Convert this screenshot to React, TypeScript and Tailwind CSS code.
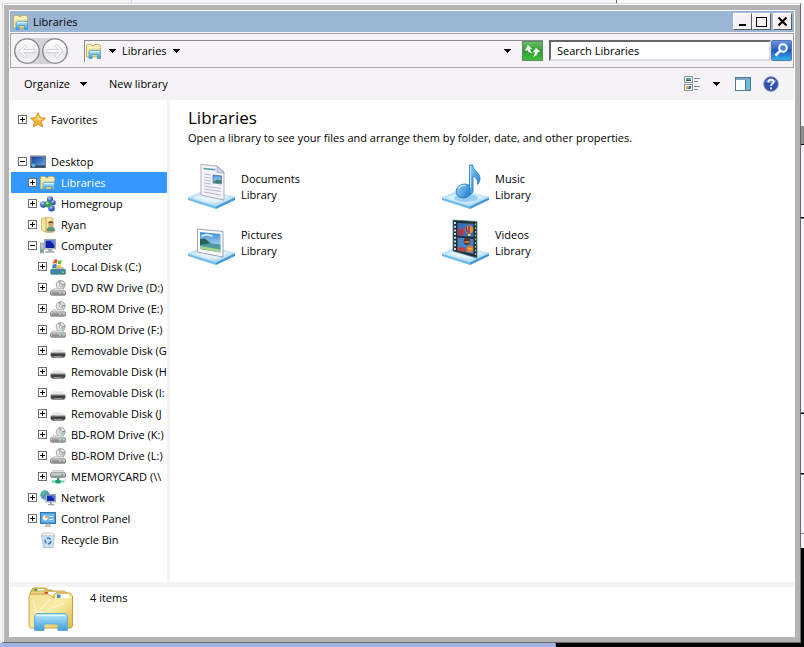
import { ReactNode, useState } from 'react';

type IconName =
  | 'star' | 'desktop' | 'library' | 'homegroup' | 'user' | 'computer' | 'localDisk'
  | 'optical' | 'removable' | 'netDrive' | 'network' | 'controlPanel' | 'recycle';

type TreeItem = { label: string; icon: IconName; level: 0 | 1 | 2; box?: '+' | '-' };

const TREE: TreeItem[] = [
  { label: 'Desktop', icon: 'desktop', level: 0, box: '-' },
  { label: 'Libraries', icon: 'library', level: 1, box: '+' },
  { label: 'Homegroup', icon: 'homegroup', level: 1, box: '+' },
  { label: 'Ryan', icon: 'user', level: 1, box: '+' },
  { label: 'Computer', icon: 'computer', level: 1, box: '-' },
  { label: 'Local Disk (C:)', icon: 'localDisk', level: 2, box: '+' },
  { label: 'DVD RW Drive (D:)', icon: 'optical', level: 2, box: '+' },
  { label: 'BD-ROM Drive (E:)', icon: 'optical', level: 2, box: '+' },
  { label: 'BD-ROM Drive (F:)', icon: 'optical', level: 2, box: '+' },
  { label: 'Removable Disk (G', icon: 'removable', level: 2, box: '+' },
  { label: 'Removable Disk (H', icon: 'removable', level: 2, box: '+' },
  { label: 'Removable Disk (I:', icon: 'removable', level: 2, box: '+' },
  { label: 'Removable Disk (J', icon: 'removable', level: 2, box: '+' },
  { label: 'BD-ROM Drive (K:)', icon: 'optical', level: 2, box: '+' },
  { label: 'BD-ROM Drive (L:)', icon: 'optical', level: 2, box: '+' },
  { label: 'MEMORYCARD (\\\\', icon: 'netDrive', level: 2, box: '+' },
  { label: 'Network', icon: 'network', level: 1, box: '+' },
  { label: 'Control Panel', icon: 'controlPanel', level: 1, box: '+' },
  { label: 'Recycle Bin', icon: 'recycle', level: 1 },
];

const INDENT = ['pl-[7px]', 'pl-[17px]', 'pl-[27px]'];

// shared gradients, referenced by id from every icon below
const Gradients = () => (
  <svg width="0" height="0" className="absolute" aria-hidden="true">
    <defs>
      <linearGradient id="gFolder" x1="0" y1="0" x2="1" y2="1">
        <stop offset="0" stopColor="#f3e092" /><stop offset=".5" stopColor="#f8eba6" /><stop offset="1" stopColor="#e3bb4c" />
      </linearGradient>
      <linearGradient id="gBlue" x1="0" y1="0" x2="0" y2="1">
        <stop offset="0" stopColor="#b6e6f8" /><stop offset="1" stopColor="#3f9fdc" />
      </linearGradient>
      <linearGradient id="gScreen" x1="0" y1="0" x2="1" y2="1">
        <stop offset="0" stopColor="#1a3f92" /><stop offset="1" stopColor="#5da2ee" />
      </linearGradient>
      <linearGradient id="gTray" x1="0" y1="0" x2="1" y2="1">
        <stop offset="0" stopColor="#a9daf3" /><stop offset=".5" stopColor="#dcf0fa" /><stop offset="1" stopColor="#97cdee" />
      </linearGradient>
      <linearGradient id="gNote" x1="0" y1="0" x2="1" y2="1">
        <stop offset="0" stopColor="#8fd2fb" /><stop offset="1" stopColor="#1672c8" />
      </linearGradient>
      <linearGradient id="gSky" x1="0" y1="0" x2="0" y2="1">
        <stop offset="0" stopColor="#3f8fd6" /><stop offset="1" stopColor="#d9f1f8" />
      </linearGradient>
      <linearGradient id="gDrive" x1="0" y1="0" x2="0" y2="1">
        <stop offset="0" stopColor="#f2f2f2" /><stop offset="1" stopColor="#8c8c8c" />
      </linearGradient>
      <linearGradient id="gDark" x1="0" y1="0" x2="0" y2="1">
        <stop offset="0" stopColor="#8a8a8a" /><stop offset=".4" stopColor="#3a3a3a" /><stop offset="1" stopColor="#5c5c5c" />
      </linearGradient>
      <radialGradient id="gBall" cx=".4" cy=".3" r=".8">
        <stop offset="0" stopColor="#b9cdfa" /><stop offset=".5" stopColor="#4468cc" /><stop offset="1" stopColor="#1e3390" />
      </radialGradient>
      <linearGradient id="gGreen" x1="0" y1="0" x2="0" y2="1">
        <stop offset="0" stopColor="#6cc069" /><stop offset=".5" stopColor="#2f9c33" /><stop offset="1" stopColor="#3dc23c" />
      </linearGradient>
      <linearGradient id="gSearch" x1="0" y1="0" x2="0" y2="1">
        <stop offset="0" stopColor="#6f9ae6" /><stop offset=".5" stopColor="#1f56c4" /><stop offset="1" stopColor="#2fb9ee" />
      </linearGradient>
      <linearGradient id="gRound" x1="0" y1="0" x2="0" y2="1">
        <stop offset="0" stopColor="#ffffff" /><stop offset=".5" stopColor="#f1f0f3" /><stop offset=".55" stopColor="#e4e3e8" /><stop offset="1" stopColor="#f8f8fa" />
      </linearGradient>
    </defs>
  </svg>
);

const LibraryGlyph = () => (
  <>
    <path d="M.5 2.500 1 1.500h4l1 1h2l.5-1h5l1 1.500v11H.5z" fill="url(#gFolder)" stroke="#c9a548" strokeWidth=".8" />
    <path d="M2 2.600h2.500M9.500 2.600h3" stroke="#fff" />
    <path d="M1 4.500h13.500" stroke="#fbf3c4" />
    <path d="M3 15.500V8.300l1-1h9.500l1 1v7.200h-3v-4H6v4z" fill="url(#gBlue)" stroke="#3d9bd0" strokeWidth=".8" />
    <path d="M4 8.600h9.500" stroke="#e3f7fd" />
  </>
);

const glyphs: Record<IconName, ReactNode> = {
  star: (
    <>
      <path d="M8 .8 10.200 5.600l5.200.6-3.900 3.500 1.100 5.200L8 12.300l-4.600 2.600 1.100-5.200L.6 6.200l5.200-.6z" fill="#f9b233" stroke="#d98322" strokeWidth=".9" />
      <path d="M8 2.500 9.500 6.300l3.500.5-3 2.300L8 8z" fill="#fee48c" />
      <path d="M8 2.500V8L3 6.900l3.500-.6z" fill="#fdd160" />
    </>
  ),
  desktop: (
    <>
      <rect x=".5" y="2" width="15" height="11.500" fill="#8496ac" stroke="#6b7b8e" />
      <rect x="1.500" y="3" width="13" height="8.500" fill="url(#gScreen)" />
      <path d="M1 11.500h14v2H1z" fill="#2b3f5c" />
      <circle cx="3.500" cy="11.500" r="1.800" fill="#58b8d8" />
    </>
  ),
  library: <LibraryGlyph />,
  homegroup: (
    <>
      <path d="M4 9 8 5l5-2M8 5l4 8" stroke="#8aa0cf" strokeWidth="1.500" fill="none" />
      <circle cx="3.300" cy="8.500" r="3.200" fill="url(#gBall)" />
      <circle cx="10" cy="3.400" r="3.100" fill="url(#gBall)" />
      <circle cx="13.200" cy="6.500" r="2.600" fill="url(#gBall)" />
      <circle cx="11.500" cy="12.300" r="3.300" fill="url(#gBall)" />
      <circle cx="8" cy="8.200" r="3.300" fill="#2f9f4a" />
      <circle cx="7.300" cy="7" r="1.400" fill="#9be09d" />
    </>
  ),
  user: (
    <>
      <path d="M1.500 1.500 6 .8h7v14.500H6L1.500 13z" fill="url(#gFolder)" stroke="#c9ac55" strokeWidth=".8" />
      <path d="M6 1v14" stroke="#b99741" strokeWidth=".8" />
      <path d="M7 14c0-3 1.500-4 3.800-4s4 1 4 4z" fill="#5c9b86" stroke="#467a68" strokeWidth=".6" />
      <circle cx="10.800" cy="7" r="2.600" fill="#d9a673" />
      <path d="M8.200 6.500c0-3.500 5.200-3.500 5.200 0-1.500-1-3.500-1-5.200 0z" fill="#6b4526" />
    </>
  ),
  computer: (
    <>
      <rect x=".3" y="5" width="3" height="10" fill="#b7bfc4" stroke="#7d868c" strokeWidth=".6" />
      <path d="M1 11h1.500v3H1z" fill="#3cb44b" />
      <rect x="4.500" y="1.500" width="11" height="9.500" fill="#d3d7dc" stroke="#8f979e" strokeWidth=".8" />
      <rect x="5.500" y="2.500" width="9" height="7.500" fill="#1020a8" />
      <path d="M10 2.500h4.500v5z" fill="#5f80f2" />
      <path d="M8 11h4v2h2.500v1.800H5.500V13H8z" fill="#aab0b6" />
    </>
  ),
  localDisk: (
    <>
      <path d="M.7 11 3 8h10l2.500 3z" fill="#a9c5d0" />
      <rect x=".7" y="10.500" width="14.800" height="4.800" rx="1" fill="#3c87a8" stroke="#5a6e78" strokeWidth=".7" />
      <path d="M12 12.500h2v1.500h-2z" fill="#5fe06a" />
      <path d="M3.500 1.500Q6-.5 7.500 1L7 4.500Q5 3.500 3 5z" fill="#e4572b" />
      <path d="M8.300 1.200Q10 2.500 12 .8L11.300 4.500Q9.500 6 7.700 4.800z" fill="#6fb83b" />
      <path d="M2.800 5.700Q5 4.300 6.800 5.500L6.200 9.200Q4.500 8 2.200 9.200z" fill="#3a7bd0" />
      <path d="M7.500 5.700Q9 6.900 11.200 5.500L10.500 9.300Q8.700 10.500 7 9.300z" fill="#f6c22c" />
    </>
  ),
  optical: (
    <>
      <circle cx="10.700" cy="5" r="4.500" fill="#e2e2e8" stroke="#9a9aa0" strokeWidth=".8" />
      <path d="M10.700 5 8 1.200a4.500 4.500 0 0 1 3-.6z" fill="#a6abb4" />
      <path d="M10.700 5 14.700 6.500a4.500 4.500 0 0 1-1.800 2.300z" fill="#9ccca5" />
      <path d="M10.700 5 15 3.500v2z" fill="#8f8f96" />
      <circle cx="10.700" cy="5" r="1.300" fill="#fff" stroke="#888" strokeWidth=".6" />
      <path d="M.8 11.500 3 8.800h9.500l2.700 2.700z" fill="#ececec" stroke="#a3a3a3" strokeWidth=".6" />
      <rect x=".6" y="11" width="14.800" height="4.200" rx="1" fill="url(#gDrive)" stroke="#757575" strokeWidth=".8" />
      <path d="M2 13h7" stroke="#555" strokeWidth=".8" />
      <path d="M11 12.300h1.500v1.500H11z" fill="#37b24a" />
    </>
  ),
  removable: (
    <>
      <path d="M.8 9.500 3.500 6.500h9l2.700 3z" fill="#e6e6e6" />
      <path d="M.6 9.500h14.800v3.200l-1 1.500-1.500.6H3.100l-1.500-.6-1-1.500z" fill="url(#gDark)" />
      <path d="M1 9.600h14" stroke="#b3b3b3" />
      <path d="M4 13h8l.6 2H3.400z" fill="#8e8e8e" />
    </>
  ),
  netDrive: (
    <>
      <path d="M1 4 3 1.500h10L15 4z" fill="#e4e4e4" stroke="#aaa" strokeWidth=".5" />
      <rect x=".6" y="3.800" width="14.800" height="4.500" rx="1" fill="url(#gDrive)" stroke="#757575" strokeWidth=".8" />
      <path d="M11.500 5.300H13v1.500h-1.500z" fill="#37b24a" />
      <path d="M7 8.600h2.500v3.200H7z" fill="#2fa57f" />
      <path d="M1.500 11.500h13v2h-13z" fill="#62cda9" />
      <path d="M5.500 11h5v3.500h-5z" fill="#1f9a72" />
    </>
  ),
  network: (
    <>
      <circle cx="5" cy="5" r="4.700" fill="#4a9ad8" />
      <path d="M2 2Q5 0 6.500 1.500L5 4 2.500 5.500.6 4.500zM5 6l2.500-.5V9L5 9.500z" fill="#57b869" />
      <rect x="6" y="4.500" width="9.500" height="7.500" fill="#c9d2dc" stroke="#77848f" strokeWidth=".7" />
      <rect x="7" y="5.500" width="7.500" height="5.500" fill="#1226b0" />
      <path d="M10.500 5.500h4v4z" fill="#4a73ee" />
      <path d="M10 12h1.800v2H14v1.300H8V14h2z" fill="#9aa6b1" />
    </>
  ),
  controlPanel: (
    <>
      <rect x=".5" y="1.500" width="15" height="11" fill="#4d9fdb" stroke="#3579ae" />
      <rect x="2" y="3" width="12" height="8" fill="#6fb5e6" />
      <circle cx="5.200" cy="7" r="2.500" fill="#e9f5fc" />
      <path d="M5.200 7V4.500A2.500 2.500 0 0 1 7.700 7z" fill="#f0a23a" />
      <path d="M9.500 5.500h3.500M9.500 8.500h3.500" stroke="#fff" strokeWidth="1.200" />
      <path d="M5 15.500Q6 12.500 8 12.500t3 3z" fill="#c2c7cc" stroke="#9aa0a5" strokeWidth=".5" />
    </>
  ),
  recycle: (
    <>
      <path d="M1.500 2.500h13L13 15.500H3.500z" fill="#cfe2f1" stroke="#9db9d0" strokeWidth=".8" />
      <path d="M1.500 2 4 .6l2 1 2.500-1 2 1L13 .8l2 1.500-1 1.500H2z" fill="#eef4f8" stroke="#a3b4c2" strokeWidth=".6" />
      <circle cx="8" cy="9" r="2.800" fill="none" stroke="#3e85d2" strokeWidth="1.700" strokeDasharray="4.200 1.600" />
    </>
  ),
};

const SmallIcon = ({ name }: { name: IconName }) => (
  <svg width="16" height="16" viewBox="0 0 16 16" className="shrink-0" aria-hidden="true">{glyphs[name]}</svg>
);

const Caret = () => (
  <svg width="8" height="4" viewBox="0 0 8 4" className="shrink-0" shapeRendering="crispEdges" aria-hidden="true">
    <path d="M0 0h8L4 4z" />
  </svg>
);

const ExpandBox = ({ sign, label }: { sign: '+' | '-'; label: string }) => (
  <button aria-label={`Toggle ${label}`} className="shrink-0">
    <svg width="9" height="9" viewBox="0 0 9 9" className="block" shapeRendering="crispEdges">
      <rect x=".5" y=".5" width="8" height="8" fill="#fff" stroke="#6e6e6e" />
      <path d="M2 4h5v1H2z" />
      {sign === '+' && <path d="M4 2h1v5H4z" />}
    </svg>
  </button>
);

function TreeRow({ item, selected, onSelect }: { item: TreeItem; selected: boolean; onSelect: () => void }) {
  return (
    <li className={`flex h-[21px] items-center gap-[3px] ml-px ${INDENT[item.level]} ${selected ? 'bg-[#3399ff] text-white' : ''}`}>
      {item.box ? <ExpandBox sign={item.box} label={item.label} /> : <span className="w-[9px] shrink-0" />}
      <button onClick={onSelect} className="flex items-center gap-[5px] whitespace-nowrap">
        <SmallIcon name={item.icon} />
        {item.label}
      </button>
    </li>
  );
}

const Tray = () => (
  <>
    <path d="M0 35.500 28 44v3L0 38z" fill="#6fbbe8" />
    <path d="M28 44 47 35v3L28 47z" fill="#4299d3" />
    <path d="M0 35.500 18 28.500 47 35 28 44z" fill="url(#gTray)" stroke="#a9d8f2" strokeWidth=".6" />
    <path d="M6 35.500 19 31l21 4.300L28 41z" fill="#eaf6fc" opacity=".8" />
  </>
);

const LIBRARIES: { name: string; art: ReactNode }[] = [
  {
    name: 'Documents',
    art: (
      <>
        <path d="M13 2.500 29 4l7 6v28L13 33z" fill="#f4f4fa" stroke="#9a9cab" strokeWidth=".8" />
        <path d="M29 4v6.500l7 .5z" fill="#d3d6e2" stroke="#8d90a3" strokeWidth=".6" />
        <path d="m15.500 6.500 12 1.300" stroke="#4c9cad" strokeWidth="1.600" />
        <path d="m16 12 7 1m-7 2 7 1m-7 2 7 1m-7 2 7 1m-7 2 17 2.500M16 27l17 2.500M16 30l17 3" stroke="#b9b4d6" />
        <path d="m25 13 8.500 1v8L25 21z" fill="url(#gSky)" stroke="#3e6a9c" strokeWidth=".7" />
        <path d="m25.300 19.500 4-2 4 1v3l-8-1z" fill="#3e7867" />
      </>
    ),
  },
  {
    name: 'Music',
    art: (
      <>
        <ellipse cx="24" cy="36" rx="12" ry="4" fill="#64b5ea" opacity=".6" />
        <ellipse cx="22" cy="29" rx="8" ry="6.800" fill="url(#gNote)" stroke="#2275bd" strokeWidth=".8" transform="rotate(-20 22 29)" />
        <path d="M27.500 3h3.200c.5 6 7.300 7.500 7.300 13.500 0 3-1.500 5-2.500 6 .5-5-1.500-7-4.500-8.500V29c0 2-1 3-3.500 3z" fill="url(#gNote)" stroke="#2275bd" strokeWidth=".8" />
        <path d="M28.500 4v22" stroke="#b9e5fd" />
        <path d="M16.500 27c1-2.500 4-4 7-3.500" stroke="#c5ebff" strokeWidth="1.300" fill="none" />
      </>
    ),
  },
  {
    name: 'Pictures',
    art: (
      <>
        <path d="m9.500 11 25.500 2.500V39L9.500 34z" fill="#fbfcfd" stroke="#8f9aa6" strokeWidth=".9" />
        <path d="m12 14 20.500 2v18.500L12 31z" fill="url(#gSky)" />
        <path d="m12 23 5-1.500 7 4 8.500 1v8L12 31z" fill="#4f9aa0" />
        <path d="m12 21 5-.5 5 4.500-10 2z" fill="#2b6054" />
        <path d="m12 28 20.500 3.500v3L12 31z" fill="#a9d08c" />
        <path d="m13.500 18 5-1.500 6 1.500" stroke="#e9f5fc" strokeWidth="1.500" fill="none" />
      </>
    ),
  },
  {
    name: 'Videos',
    art: (
      <>
        <path d="m11 2 24 1.500V40L11 33z" fill="#262b2e" stroke="#3d7f86" strokeWidth=".8" />
        <path d="M13 4v29" stroke="#d5eef0" strokeWidth="1.800" strokeDasharray="2 1.700" />
        <path d="M33.500 5.500V39" stroke="#9db7ba" strokeWidth="1.300" strokeDasharray="2 1.700" />
        <path d="m15.500 5 16 .8V19l-16-1.500z" fill="#3472bd" />
        <path d="m15.500 19.500 16 1.500v15l-16-3.500z" fill="#3c86cf" />
        <path d="m15.500 11 6-.5 1 6-7 1z" fill="#c93a3a" />
        <path d="M17 12v5m2.500-5v5" stroke="#5b3f8e" />
        <circle cx="27" cy="11.500" r="4.200" fill="#ec8c2c" />
        <path d="M27 7.500v8M24.500 8.500q-1 3 1 6" stroke="#5b2c7e" strokeWidth="1.300" fill="none" />
        <path d="M26 16h2.500v2H26z" fill="#f5d34d" />
        <circle cx="25" cy="23.500" r="3.400" fill="#6b2c2c" />
        <circle cx="28" cy="31" r="3.300" fill="#eb7d27" />
        <path d="m15.500 29 7 .5 2 4.500-9-1.500z" fill="#c0413a" />
        <path d="M22.500 24h5M26 30l4 1" stroke="#f3d04b" />
      </>
    ),
  },
];

const StatusFolder = () => (
  <svg width="48" height="48" viewBox="0 0 48 48" className="shrink-0" aria-hidden="true">
    <path d="M3 4 5 1h13l2 2h4l1 2H3z" fill="#e9c863" stroke="#b98f33" strokeWidth=".8" />
    <path d="M6 2h10v3.500H6z" fill="#fff" /><path d="M6 2h3.500v3.500H6z" fill="#41a447" />
    <path d="M2 8V6l2-2h32l5 3v5z" fill="#efd67c" stroke="#c09a3f" strokeWidth=".8" />
    <path d="M16.500 5H28v3.500H16.500z" fill="#fff" /><path d="M16.500 5H20v3.500h-3.500z" fill="#dc4a27" />
    <path d="M1 9l1.500-2H20l6 4V8l2-2h14l2.500 3v30L43 41H2.500L1 39z" fill="url(#gFolder)" stroke="#c39a3c" strokeWidth=".9" />
    <path d="M29 7.500h12V11H29z" fill="#fff" /><path d="M29 7.500h3.500V11H29z" fill="#3e8fbb" />
    <path d="M9 27 22 12M9 27 5 13M9 27l28-11" stroke="#fffbdc" strokeWidth="1.300" opacity=".7" />
    <path d="M6.500 43.500V29l2-2.500h29l2 2.500v14.500H30V37H16v6.500z" fill="url(#gBlue)" stroke="#5aa9d2" strokeWidth=".9" />
    <path d="M8 28.500h30" stroke="#e4f7fd" strokeWidth="1.300" />
  </svg>
);

const NavButtons = () => (
  <div className="flex gap-[2px] rounded-full bg-[#d3d2d6]">
    {['Back', 'Forward'].map((label) => (
      <button key={label} aria-label={label}>
        <svg width="26" height="26" viewBox="0 0 26 26" className="block">
          <circle cx="13" cy="13" r="12.200" fill="url(#gRound)" stroke="#85858b" strokeWidth="1.300" />
          <path
            d={label === 'Back' ? 'M5 13l6.500-6.500 1.500 1.500-3.500 3.500H21v3H9.500L13 18l-1.500 1.500z' : 'M21 13l-6.500-6.500L13 8l3.500 3.500H5v3h11.500L13 18l1.500 1.500z'}
            fill="#fbfbfc" stroke="#cfced4" strokeWidth=".9"
          />
        </svg>
      </button>
    ))}
  </div>
);

const winBtn = 'flex h-[17px] w-[19px] items-center justify-center border border-t-white border-l-white border-r-[#5c5c5c] border-b-[#5c5c5c] bg-[#f4f0f4]';

export default function App() {
  const [current, setCurrent] = useState('Libraries');

  return (
    <div className="relative flex min-h-screen flex-col bg-[#f6f3f6] pt-[3px] pr-[3px] pb-1 pl-[2px] font-['Open_Sans',sans-serif] text-[11px] leading-4 text-black">
      <Gradients />

      {/* slivers of the desktop and the windows underneath */}
      <div className="absolute inset-x-0 top-0 flex h-[3px]" aria-hidden="true">
        <span className="w-[131px]" />
        <span className="flex-1 border-l border-[#d5d3d8] bg-[#f5f6fc]" />
        <span className="w-[188px] border-l border-[#66666a] bg-white" />
      </div>
      <div className="absolute inset-x-0 bottom-0 flex h-[5px] bg-black" aria-hidden="true">
        <span className="w-[556px] rounded-tr-sm border-t border-[#e6e8f6] bg-[#a3b3ea]" />
      </div>
      <div className="absolute top-[126px] right-0 bottom-0 flex w-[3px] flex-col" aria-hidden="true">
        <span className="h-[19px] border-b border-black bg-[#8d8d8d]" />
        <span className="h-[73px] border-b border-black" />
        <span className="h-[195px] border-y border-[#77777a]" />
        <span className="h-[61px] border-y border-black" />
        <span className="h-[60px] border-y border-[#77777a]" />
        <span className="mt-[14px] flex-1 bg-black" />
      </div>

      <div className="relative flex flex-1 flex-col border border-t-[#dcdadd] border-r-[#6a6a6a] border-b-[#6a6a6a] border-l-[#dcdadd]">
        <div className="flex flex-1 flex-col border-t border-l border-white bg-[#b4b4b4] p-[5px]">
          <div className="flex flex-1 flex-col border border-white bg-[#f6f3f6]">

            <header className="flex h-[21px] items-center bg-[#9bb5d4] pr-[2px] pl-[3px]">
              <SmallIcon name="library" />
              <h1 className="ml-1 flex-1">Libraries</h1>
              <button aria-label="Minimize" className={winBtn}>
                <svg width="11" height="11" shapeRendering="crispEdges"><path d="M2 8h7v2H2z" /></svg>
              </button>
              <button aria-label="Maximize" className={winBtn}>
                <svg width="11" height="11" shapeRendering="crispEdges"><path d="M.5 1h10v9.500H.5zM.5 1.500h10" fill="none" stroke="#000" /></svg>
              </button>
              <button aria-label="Close" className={`ml-[2px] ${winBtn}`}>
                <svg width="11" height="11"><path d="m1.500 1.500 8 8m0-8-8 8" stroke="#000" strokeWidth="2" /></svg>
              </button>
            </header>

            <div className="mt-px flex h-[35px] items-center border border-[#a3a3a8] pr-px pl-[3px]">
              <NavButtons />
              <div className="ml-4 flex h-[22px] flex-1 items-center border-t border-l border-[#8a8a8f] pl-px">
                <SmallIcon name="library" />
                <button aria-label="Location history" className="ml-[6px]"><Caret /></button>
                <button className="ml-[6px] flex items-center gap-[5px]">Libraries <Caret /></button>
                <button aria-label="Previous locations" className="mr-[11px] ml-auto"><Caret /></button>
                <button aria-label="Refresh">
                  <svg width="21" height="20" viewBox="0 0 21 20" className="block">
                    <rect x=".5" y=".5" width="20" height="19" fill="url(#gGreen)" stroke="#5b8a5c" />
                    <path d="M2.500 9.500 6.500 4l3.800 4.500H8c0 2 .5 3 2 4.500-3-.5-4.500-2-4.700-4z" fill="#fff" transform="rotate(-8 6 8)" />
                    <path d="M18.500 10.500 14 7l-3.500 4.500 2.300-.2c0 2-.5 3.200-2 4.700 3-.5 4.800-2.500 5-5z" fill="#fff" />
                  </svg>
                </button>
              </div>
              <input
                type="text" aria-label="Search Libraries" placeholder="Search Libraries"
                className="ml-[6px] h-[21px] w-[222px] border-2 border-t-[#66666a] border-r-[#dedce0] border-b-[#dedce0] border-l-[#66666a] bg-white px-[6px] outline-none placeholder:text-black"
              />
              <button aria-label="Search">
                <svg width="21" height="21" viewBox="0 0 21 21" className="block">
                  <rect x=".5" y=".5" width="20" height="20" rx="1" fill="url(#gSearch)" stroke="#5674a8" />
                  <circle cx="12" cy="8" r="3.800" fill="#4d86df" stroke="#fff" strokeWidth="2" />
                  <path d="m9 11-4.500 4.500" stroke="#fff" strokeWidth="2.500" />
                </svg>
              </button>
            </div>

            <div className="flex h-8 items-center pr-[15px] pl-[14px]">
              <button className="flex items-center gap-[9px]">Organize <Caret /></button>
              <button className="ml-[22px]">New library</button>
              <button aria-label="Change your view" className="ml-auto">
                <svg width="16" height="16" viewBox="0 0 16 16" className="block" shapeRendering="crispEdges">
                  <path d="M.5.500h8v6h-8zM.5 8.500h8v6h-8z" fill="#fff" stroke="#8292a3" />
                  <path d="M2 2h5v3H2z" fill="#58a6a0" /><path d="M2 4h5v1H2z" fill="#285a4c" />
                  <path d="M2 10h3v3H2z" fill="#d8a93b" /><path d="M5 10h2v2H5z" fill="#3c66c4" /><path d="M4 12h3v1H4z" fill="#3d8c3e" />
                  <path d="M10 2h6v1h-6zm0 3h4v1h-4zm0 5h6v1h-6zm0 3h4v1h-4z" fill="#75879c" />
                </svg>
              </button>
              <button aria-label="More view options" className="ml-3"><Caret /></button>
              <button aria-label="Show the preview pane" className="ml-[15px]">
                <svg width="16" height="14" viewBox="0 0 16 14" className="block" shapeRendering="crispEdges">
                  <rect x=".5" y=".5" width="15" height="13" fill="#fff" stroke="#4b7796" />
                  <path d="M1 1h14v1.500H1z" fill="#7fa7c2" />
                  <path d="M10 2.500h5V13h-5z" fill="#67bdd6" /><path d="M10 2.500h1V13h-1z" fill="#4b7796" />
                </svg>
              </button>
              <button aria-label="Get help" className="ml-3">
                <svg width="16" height="16" viewBox="0 0 16 16" className="block">
                  <circle cx="8" cy="8" r="7.400" fill="#2f4fae" stroke="#9aa6c6" />
                  <path d="M2.500 6a6 6 0 0 1 11 0q-5.500 2-11 0z" fill="#6f8fdc" />
                  <path d="M5.500 6.200c0-3.400 5.200-3.200 5.200-.4C10.700 7.800 8 7.800 8 10" stroke="#fff" strokeWidth="1.800" fill="none" />
                  <circle cx="8" cy="12.300" r="1.100" fill="#fff" />
                </svg>
              </button>
            </div>

            <div className="flex flex-1 bg-white">
              <nav aria-label="Folders" className="w-[160px] shrink-0 overflow-hidden border-r-3 border-[#f6f3f6] pt-[9px]">
                <ul>
                  <TreeRow
                    item={{ label: 'Favorites', icon: 'star', level: 0, box: '+' }}
                    selected={current === 'Favorites'} onSelect={() => setCurrent('Favorites')}
                  />
                </ul>
                <ul className="mt-[21px]">
                  {TREE.map((item) => (
                    <TreeRow key={item.label} item={item} selected={current === item.label} onSelect={() => setCurrent(item.label)} />
                  ))}
                </ul>
              </nav>

              <main className="min-w-0 flex-1 pt-[6px] pl-[18px]">
                <h2 className="text-[17px] leading-6">Libraries</h2>
                <p>Open a library to see your files and arrange them by folder, date, and other properties.</p>
                <div className="mt-4 grid grid-cols-[repeat(auto-fill,254px)] gap-y-2">
                  {LIBRARIES.map((lib) => (
                    <button key={lib.name} className="flex h-12 items-center gap-[5px] text-left">
                      <svg width="48" height="48" viewBox="0 0 48 48" className="shrink-0" aria-hidden="true"><Tray />{lib.art}</svg>
                      <span className="pt-px">{lib.name}<br />Library</span>
                    </button>
                  ))}
                </div>
              </main>
            </div>

            <footer className="flex h-[54px] gap-[14px] border-t-5 border-[#f6f3f6] bg-white pl-[18px]">
              <StatusFolder />
              <span className="pt-[3px]">4 items</span>
            </footer>
          </div>
        </div>
      </div>
    </div>
  );
}
